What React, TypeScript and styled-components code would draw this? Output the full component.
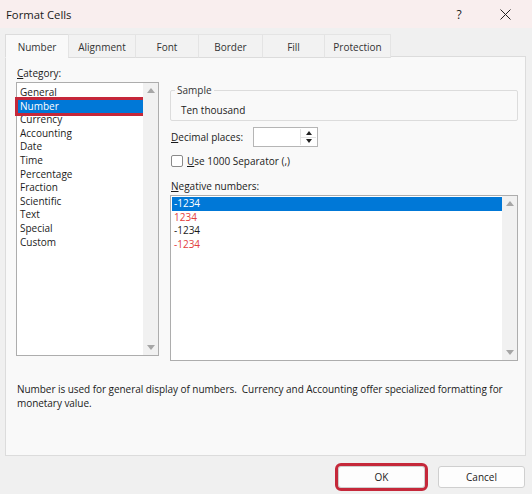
import { createGlobalStyle, styled } from "styled-components";

const GlobalStyle = createGlobalStyle`
  html, body {
    margin: 0;
    padding: 0;
    background: #f0f0f0;
  }
  body {
    font-family: "Open Sans", "Noto Sans", sans-serif;
    font-size: 10px;
    color: #1b1b1b;
  }
`;

const Dialog = styled.div`
  width: 532px;
  height: 494px;
  display: flex;
  flex-direction: column;
  background: #f0f0f0;
  overflow: hidden;
`;

const TitleBar = styled.div`
  height: 28px;
  flex: none;
  display: flex;
  align-items: center;
  padding: 0 4px 0 6px;
  background: #f9eeee;
  font-size: 11.3px;
  color: #1a1a1a;
`;

const Title = styled.span`
  flex: 1;
`;

const TitleButton = styled.span`
  width: 46px;
  height: 28px;
  display: flex;
  align-items: center;
  justify-content: center;
  font-size: 12px;
`;

const Body = styled.div`
  display: flex;
  flex-direction: column;
  padding: 6px 6px 0 5px;
`;

const Tabs = styled.div`
  display: flex;
  height: 23px;
  position: relative;
  z-index: 1;
  margin-bottom: -1px;
`;

const Tab = styled.div<{ $w: number; $active?: boolean }>`
  width: ${(p) => p.$w}px;
  height: 24px;
  box-sizing: border-box;
  display: flex;
  align-items: center;
  justify-content: center;
  padding-top: 1px;
  font-size: 10px;
  color: #333;
  background: ${(p) => (p.$active ? "#f9f9f9" : "#f2f2f2")};
  border: 1px solid ${(p) => (p.$active ? "#dcdcdc" : "#e4e4e4")};
  border-bottom: ${(p) => (p.$active ? "1px solid #f9f9f9" : "1px solid #dcdcdc")};
  margin-left: -1px;
  &:first-child {
    margin-left: 0;
  }
`;

const Panel = styled.div`
  height: 400px;
  box-sizing: border-box;
  border: 1px solid #dcdcdc;
  background: #f9f9f9;
  padding: 8px 8px 0 10px;
  display: flex;
  flex-direction: column;
`;

const Columns = styled.div`
  display: grid;
  grid-template-columns: 143px 348px;
  column-gap: 11px;
`;

const Column = styled.div`
  display: flex;
  flex-direction: column;
`;

const Label = styled.div<{ $mt?: number }>`
  line-height: 16px;
  margin-top: ${(p) => p.$mt ?? 0}px;
  padding-left: 1px;
  color: #1b1b1b;
`;

const ListBox = styled.div<{ $h: number }>`
  height: ${(p) => p.$h}px;
  box-sizing: border-box;
  border: 1px solid #adadad;
  background: #fff;
  display: flex;
  margin-top: 1px;
`;

const Items = styled.div<{ $pt: number }>`
  flex: 1;
  padding-top: ${(p) => p.$pt}px;
`;

const Item = styled.div<{ $sel?: boolean; $red?: boolean; $mark?: boolean }>`
  height: 13.6px;
  line-height: 13.6px;
  padding-left: 2px;
  margin-left: 1px;
  white-space: nowrap;
  background: ${(p) => (p.$sel ? "#0078d7" : "transparent")};
  color: ${(p) => (p.$sel ? "#fff" : p.$red ? "#e2403c" : "#1b1b1b")};
  outline: ${(p) => (p.$mark ? "3px solid #c5283a" : "none")};
`;

const ScrollBar = styled.div`
  width: 15px;
  background: #f1f1f1;
  display: flex;
  flex-direction: column;
  justify-content: space-between;
  align-items: center;
  padding: 5px 0;
`;

const Arrow = ({ down }: { down?: boolean }) => (
  <svg width="8" height="5" viewBox="0 0 8 5">
    <path d={down ? "M0 0 L8 0 L4 5 Z" : "M0 5 L8 5 L4 0 Z"} fill="#a6a6a6" />
  </svg>
);

const Fieldset = styled.fieldset`
  margin: 18px 0 0;
  padding: 0 0 3px 10px;
  border: 1px solid #dcdcdc;
  border-radius: 2px;
  min-width: 0;
`;

const Legend = styled.legend`
  margin-left: -6px;
  padding: 0 2px;
  line-height: 14px;
  color: #333;
`;

const SampleText = styled.div`
  line-height: 14px;
  margin-top: 6px;
`;

const Row = styled.div<{ $mt: number }>`
  display: flex;
  align-items: center;
  margin-top: ${(p) => p.$mt}px;
  padding-left: 1px;
`;

const FieldLabel = styled.span`
  width: 82px;
`;

const SpinBox = styled.div`
  width: 65px;
  height: 20px;
  box-sizing: border-box;
  border: 1px solid #b5b5b5;
  background: #fff;
  display: flex;
  justify-content: flex-end;
  padding: 1px;
`;

const SpinButtons = styled.div`
  width: 15px;
  display: flex;
  flex-direction: column;
  border-left: 1px solid #e3e3e3;
`;

const SpinButton = styled.div`
  flex: 1;
  display: flex;
  align-items: center;
  justify-content: center;
  & + & {
    border-top: 1px solid #e3e3e3;
  }
`;

const SpinArrow = ({ down }: { down?: boolean }) => (
  <svg width="6" height="4" viewBox="0 0 6 4">
    <path d={down ? "M0 0 L6 0 L3 4 Z" : "M0 4 L6 4 L3 0 Z"} fill="#222" />
  </svg>
);

const CheckBox = styled.div`
  width: 12px;
  height: 12px;
  box-sizing: border-box;
  border: 1px solid #8a8a8a;
  border-radius: 2px;
  background: #fff;
  margin-right: 4px;
`;

const Description = styled.div`
  margin-top: 21px;
  line-height: 14px;
  padding-left: 1px;
  letter-spacing: -0.05px;
  color: #1b1b1b;
`;

const Footer = styled.div`
  height: 37px;
  display: flex;
  justify-content: flex-end;
  align-items: flex-start;
  gap: 13px;
  padding: 10px 7px 0 0;
  box-sizing: border-box;
`;

const Button = styled.button<{ $mark?: boolean }>`
  width: 87px;
  height: 22px;
  box-sizing: border-box;
  border: 1px solid #cfcfcf;
  border-radius: 3px;
  background: #fdfdfd;
  font-family: "Open Sans", "Noto Sans", sans-serif;
  font-size: 10px;
  color: #1b1b1b;
  padding: 0;
  outline: ${(p) => (p.$mark ? "3px solid #c5283a" : "none")};
`;

const categories = [
  "General",
  "Number",
  "Currency",
  "Accounting",
  "Date",
  "Time",
  "Percentage",
  "Fraction",
  "Scientific",
  "Text",
  "Special",
  "Custom",
];

const negatives = [
  { text: "-1234", red: false },
  { text: "1234", red: true },
  { text: "-1234", red: false },
  { text: "-1234", red: true },
];

const tabs = [
  { name: "Number", w: 64 },
  { name: "Alignment", w: 68 },
  { name: "Font", w: 64 },
  { name: "Border", w: 65 },
  { name: "Fill", w: 63 },
  { name: "Protection", w: 67 },
];

export default function App() {
  return (
    <>
      <GlobalStyle />
      <Dialog>
        <TitleBar>
          <Title>Format Cells</Title>
          <TitleButton>?</TitleButton>
          <TitleButton>
            <svg width="11" height="11" viewBox="0 0 11 11">
              <path d="M0.5 0.5 L10.5 10.5 M10.5 0.5 L0.5 10.5" stroke="#222" strokeWidth="1" />
            </svg>
          </TitleButton>
        </TitleBar>
        <Body>
          <Tabs>
            {tabs.map((t, i) => (
              <Tab key={t.name} $w={t.w} $active={i === 0}>
                {t.name}
              </Tab>
            ))}
          </Tabs>
          <Panel>
            <Columns>
              <Column>
                <Label>
                  <u>C</u>ategory:
                </Label>
                <ListBox $h={274}>
                  <Items $pt={3}>
                    {categories.map((c) => (
                      <Item key={c} $sel={c === "Number"} $mark={c === "Number"}>
                        {c}
                      </Item>
                    ))}
                  </Items>
                  <ScrollBar>
                    <Arrow />
                    <Arrow down />
                  </ScrollBar>
                </ListBox>
              </Column>
              <Column>
                <Fieldset>
                  <Legend>Sample</Legend>
                  <SampleText>Ten thousand</SampleText>
                </Fieldset>
                <Row $mt={6}>
                  <FieldLabel>
                    <u>D</u>ecimal places:
                  </FieldLabel>
                  <SpinBox>
                    <SpinButtons>
                      <SpinButton>
                        <SpinArrow />
                      </SpinButton>
                      <SpinButton>
                        <SpinArrow down />
                      </SpinButton>
                    </SpinButtons>
                  </SpinBox>
                </Row>
                <Row $mt={7}>
                  <CheckBox />
                  <span>
                    <u>U</u>se 1000 Separator (,)
                  </span>
                </Row>
                <Label $mt={10}>
                  <u>N</u>egative numbers:
                </Label>
                <ListBox $h={166}>
                  <Items $pt={1}>
                    {negatives.map((n, i) => (
                      <Item key={i} $sel={i === 0} $red={n.red}>
                        {n.text}
                      </Item>
                    ))}
                  </Items>
                  <ScrollBar>
                    <Arrow />
                    <Arrow down />
                  </ScrollBar>
                </ListBox>
              </Column>
            </Columns>
            <Description>
              Number is used for general display of numbers.&nbsp; Currency and Accounting offer
              specialized formatting for monetary value.
            </Description>
          </Panel>
        </Body>
        <Footer>
          <Button $mark>OK</Button>
          <Button>Cancel</Button>
        </Footer>
      </Dialog>
    </>
  );
}
